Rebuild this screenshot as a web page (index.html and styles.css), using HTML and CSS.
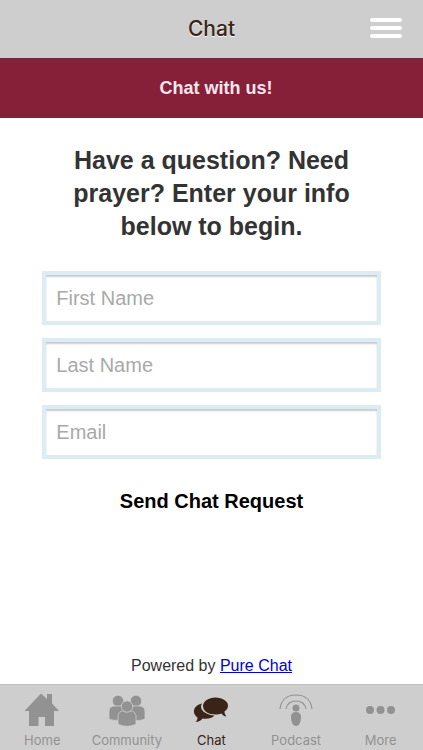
FILE: index.html
```html
<!DOCTYPE html>
<html lang="en">
<head>
    <meta charset="UTF-8">
    <meta name="viewport" content="width=device-width, initial-scale=1.0">
    <title>Chat</title>
    <link rel="stylesheet" href="styles.css">
</head>
<body>
    <header class="topbar">
        <h1>Chat</h1>
        <button type="button" class="menu" aria-label="Menu">
            <span></span>
            <span></span>
            <span></span>
        </button>
    </header>

    <h2 class="banner">Chat with us!</h2>

    <main>
        <form class="chat-form">
            <h3>Have a question? Need prayer? Enter your info below to begin.</h3>
            <input type="text" name="first" placeholder="First Name" aria-label="First Name">
            <input type="text" name="last" placeholder="Last Name" aria-label="Last Name">
            <input type="email" name="email" placeholder="Email" aria-label="Email">
            <button type="submit" class="send">Send Chat Request</button>
        </form>
        <p class="powered">Powered by <a href="#">Pure Chat</a></p>
    </main>

    <nav class="tabs">
        <a href="#">
            <svg width="36" height="36" viewBox="0 0 36 36" fill="currentColor">
                <path d="M17 1.500L.5 19H5v15h9.500v-9h6.500v9h9V19h5L28 11.500V2h-5v5z"/>
            </svg>
            Home
        </a>
        <a href="#">
            <svg width="36" height="36" viewBox="0 0 36 36" fill="currentColor" stroke="#cecece" stroke-width=".8">
                <circle cx="9" cy="9" r="5.700"/>
                <path d="M0 27v-7c0-4 2-6 6-6h7c3 0 5 2 5 6v7c-5 2-13 2-18 0z"/>
                <circle cx="27" cy="9" r="5.700"/>
                <path d="M18 27v-7c0-4 2-6 6-6h6c4 0 6 2 6 6v7c-5 2-13 2-18 0z"/>
                <path d="M9 32v-7c0-4 2-6 6-6h6c4 0 6 2 6 6v7c-5 3-13 3-18 0z"/>
                <circle cx="18" cy="14.500" r="5.700"/>
            </svg>
            Community
        </a>
        <a href="#" class="active">
            <svg width="36" height="36" viewBox="0 0 36 36" fill="currentColor">
                <path d="M9 11.500C4 12.500.5 16 1 20c0 2.500 2 4.500 3.500 5.500 0 2-.8 3.500-2 4.500 3 0 5.500-1.500 7-3.500 5 .8 9.500-.3 12-3C13.500 23 8 19 8 14.500c0-1 .3-2 1-3z"/>
                <path d="M22.500 5.500c-7 0-12.500 4-12.500 8.500 0 5 5.500 8.500 12.500 8.500 2.200 0 4.300-.4 6-1 1.200 2 3 3 5 3-1.300-1.500-2-3-2-5 2.200-1.500 3.500-3.500 3.500-5.800 0-4.500-5.500-8.200-12.500-8.200z"/>
            </svg>
            Chat
        </a>
        <a href="#">
            <svg width="36" height="36" viewBox="0 0 36 36" fill="currentColor">
                <path d="M2 17C3 8 9 3 18 3s15 5 16 14" fill="none" stroke="currentColor" stroke-width="1.200"/>
                <path d="M8 17c1-5 4-8 10-8s9 3 10 8" fill="none" stroke="currentColor" stroke-width="1.200"/>
                <circle cx="18" cy="16" r="3.500"/>
                <path d="M13 24.500c0-3 2-4.500 5-4.500s5 1.500 5 4.500c0 5-1.500 9.500-5 9.500s-5-4.500-5-9.500z"/>
            </svg>
            Podcast
        </a>
        <a href="#">
            <svg width="36" height="36" viewBox="0 0 36 36" fill="currentColor">
                <circle cx="7" cy="18" r="4"/>
                <circle cx="17.500" cy="18" r="4"/>
                <circle cx="28" cy="18" r="4"/>
            </svg>
            More
        </a>
    </nav>
</body>
</html>
```

FILE: styles.css
```css
* {
    box-sizing: border-box;
    margin: 0;
    padding: 0;
}

body {
    min-height: 100vh;
    display: flex;
    flex-direction: column;
    font-family: "Liberation Sans", Arial, sans-serif;
    color: #333;
    background-color: white;
}

.topbar {
    display: grid;
    grid-template-columns: 1fr auto 1fr;
    align-items: center;
    height: 58px;
    padding: 0 21px 2px;
    background-color: #cecece;
}

.topbar h1 {
    grid-column: 2;
    font-family: Inter, sans-serif;
    font-size: 21px;
    font-weight: 500;
    color: #3a2318;
    text-shadow: 0 1px 0 white;
}

.menu {
    justify-self: end;
    display: flex;
    flex-direction: column;
    gap: 4px;
    width: 32px;
    border: none;
    background: none;
}

.menu span {
    height: 4px;
    border-radius: 2px;
    background-color: white;
}

.banner {
    padding: 0 0 0 9px;
    border-top: 1px solid #6c2940;
    font-size: 18px;
    line-height: 59px;
    text-align: center;
    color: #fbe6ec;
    background-color: #862038;
}

main {
    flex: 1;
    display: flex;
    flex-direction: column;
    justify-content: space-between;
}

.chat-form {
    display: flex;
    flex-direction: column;
    gap: 13px;
    width: 80%;
    margin: 0 auto;
    padding-top: 26px;
}

.chat-form h3 {
    margin-bottom: 15px;
    padding: 0 24px;
    font-size: 25px;
    line-height: 33px;
    text-align: center;
}

.chat-form input {
    width: 100%;
    height: 54px;
    padding: 0 10px;
    border: 4px solid #dcecf3;
    font-family: inherit;
    font-size: 20px;
    box-shadow: inset 0 2px 2px #c8ccd0;
}

.chat-form input::placeholder {
    color: #a9a9a9;
}

.send {
    align-self: center;
    margin-top: 18px;
    border: none;
    font-family: inherit;
    font-size: 20px;
    font-weight: bold;
    color: black;
    background: none;
}

.powered {
    padding-bottom: 9px;
    font-size: 16px;
    text-align: center;
}

.powered a {
    color: #0000d0;
}

.tabs {
    display: grid;
    grid-template-columns: repeat(5, 1fr);
    height: 66px;
    padding-top: 7px;
    border-top: 1px solid #bfbfbf;
    background-color: #cecece;
}

.tabs a {
    display: flex;
    flex-direction: column;
    align-items: center;
    gap: 4px;
    font-family: Inter, sans-serif;
    font-size: 13px;
    line-height: 16px;
    text-decoration: none;
    color: #929292;
}

.tabs .active {
    color: #3a2318;
}
```
